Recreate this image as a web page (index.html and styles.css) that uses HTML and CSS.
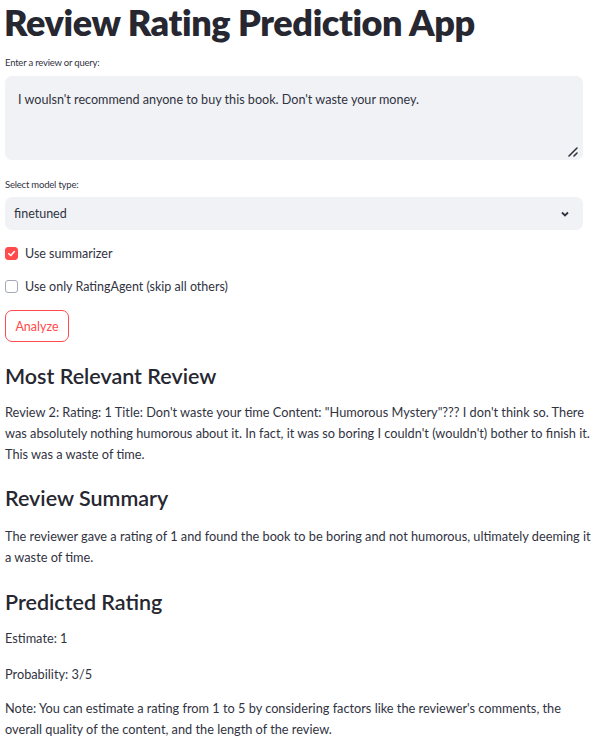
FILE: index.html
```html
<!DOCTYPE html>
<html>
<head>
<meta charset="utf-8">
<link rel="stylesheet" href="styles.css">
</head>
<body>
<main class="app">
  <h1 class="title">Review Rating Prediction App</h1>

  <label class="field-label lbl-first">Enter a review or query:</label>
  <div class="textarea">
    <span class="ta-text">I woulsn't recommend anyone to buy this book. Don't waste your money.</span>
    <svg class="resize" width="12" height="12" viewBox="0 0 12 12"><path d="M2 11 L10 3 M7 11 L10 8" stroke="#31333f" stroke-width="1.6" stroke-linecap="round" fill="none"/></svg>
  </div>

  <label class="field-label lbl-second">Select model type:</label>
  <div class="select">
    <span>finetuned</span>
    <svg class="chev" width="10" height="8" viewBox="0 0 10 8"><path d="M2 2.5 L5 5.5 L8 2.5" stroke="#31333f" stroke-width="1.8" fill="none"/></svg>
  </div>

  <div class="check check-first">
    <span class="box on"><svg width="9" height="9" viewBox="0 0 10 10"><path d="M2 5.2 L4.2 7.3 L8.2 2.8" stroke="#fff" stroke-width="1.7" fill="none" stroke-linecap="round" stroke-linejoin="round"/></svg></span>
    <span>Use summarizer</span>
  </div>
  <div class="check check-second">
    <span class="box"></span>
    <span>Use only RatingAgent (skip all others)</span>
  </div>

  <div class="btn-row"><button class="btn">Analyze</button></div>

  <h3 class="sub sub-1">Most Relevant Review</h3>
  <p class="para para-1">Review 2: Rating: 1 Title: Don't waste your time Content: "Humorous Mystery"??? I don't think so. There was absolutely nothing humorous about it. In fact, it was so boring I couldn't (wouldn't) bother to finish it. This was a waste of time.</p>

  <h3 class="sub sub-2">Review Summary</h3>
  <p class="para para-2">The reviewer gave a rating of 1 and found the book to be boring and not humorous, ultimately deeming it a waste of time.</p>

  <h3 class="sub sub-3">Predicted Rating</h3>
  <p class="para para-3">Estimate: 1</p>
  <p class="para para-4">Probability: 3/5</p>
  <p class="para para-5">Note: You can estimate a rating from 1 to 5 by considering factors like the reviewer's comments, the overall quality of the content, and the length of the review.</p>
</main>
</body>
</html>
```

FILE: styles.css
```css
html, body {
  margin: 0;
  padding: 0;
  background: #ffffff;
}
body {
  font-family: Lato, "Noto Sans", sans-serif;
  color: #31333f;
}
.app {
  display: flex;
  flex-direction: column;
  align-items: stretch;
  padding-left: 5px;
  width: 578px;
}
.title {
  margin: 0;
  font-size: 36px;
  line-height: 44px;
  font-weight: 800;
  color: #262730;
  letter-spacing: -0.4px;
  margin-left: -1px;
}
.field-label {
  display: block;
  font-size: 9.5px;
  line-height: 14px;
  letter-spacing: -0.2px;
  color: #31333f;
}
.lbl-first { margin-top: 12px; }
.lbl-second { margin-top: 18px; }
.textarea {
  position: relative;
  margin-top: 6px;
  height: 84px;
  background: #f0f2f6;
  border-radius: 7px;
  box-sizing: border-box;
  padding: 15px 13px;
  font-size: 12.6px;
  line-height: 18px;
}
.resize {
  position: absolute;
  right: 4px;
  bottom: 3px;
}
.select {
  margin-top: 5px;
  height: 33px;
  background: #f0f2f6;
  border-radius: 7px;
  display: flex;
  align-items: center;
  justify-content: space-between;
  padding: 0 13px 0 9px;
  font-size: 12.5px;
}
.chev { margin-top: 1px; }
.check {
  display: flex;
  align-items: center;
  gap: 7px;
  height: 14px;
  font-size: 12.5px;
}
.check-first { margin-top: 16px; }
.check-second { margin-top: 19px; }
.box {
  width: 13px;
  height: 13px;
  box-sizing: border-box;
  border-radius: 3px;
  border: 1px solid #a3a8b4;
  display: flex;
  align-items: center;
  justify-content: center;
  background: #fff;
}
.box.on {
  background: #ff4b4b;
  border-color: #ff4b4b;
}
.btn-row { margin-top: 17px; display: flex; }
.btn {
  height: 32px;
  width: 64px;
  border: 1px solid #ff4b4b;
  border-radius: 7px;
  background: #fff;
  color: #ff4b4b;
  font-family: inherit;
  font-size: 12.5px;
  padding: 0;
}
.sub {
  margin: 0;
  font-size: 21.5px;
  line-height: 28px;
  font-weight: 600;
  color: #262730;
}
.sub-1 { margin-top: 20px; }
.sub-2 { margin-top: 19px; }
.sub-3 { margin-top: 20px; }
.para {
  margin: 0 -8px 0 0;
  font-size: 12.75px;
  line-height: 21px;
  color: #31333f;
}
.para-1 { margin-top: 12px; }
.para-2 { margin-top: 14px; }
.para-3 { margin-top: 12px; }
.para-4 { margin-top: 15px; }
.para-5 { margin-top: 13px; }
```
